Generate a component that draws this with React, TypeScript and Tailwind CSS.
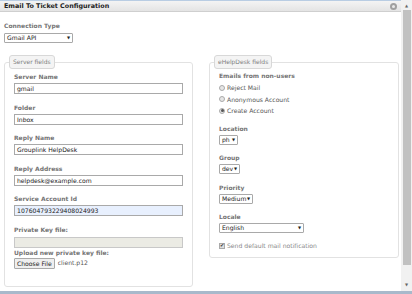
import React from "react";

const font = { fontFamily: '"DejaVu Sans", Verdana, sans-serif' };

function Label({ children, className = "" }: { children: React.ReactNode; className?: string }) {
  return <div className={"text-[6px] font-bold text-[#747474] leading-[8px] " + className}>{children}</div>;
}

function TextInput({ value, className = "" }: { value: string; className?: string }) {
  return (
    <div className={"h-[11px] w-[169px] border border-[#a9a9a9] text-[6.1px] leading-[9px] px-[2px] text-[#222] " + className}>
      {value}
    </div>
  );
}

function Select({ value, w }: { value: string; w: string }) {
  return (
    <div className={"h-[10px] border border-[#a9a9a9] rounded-[1px] bg-white flex items-center justify-between px-[2px] text-[6.1px] leading-[8px] text-[#222] " + w}>
      <span>{value}</span>
      <span className="text-[4px]">▼</span>
    </div>
  );
}

function Radio({ checked, label }: { checked?: boolean; label: string }) {
  return (
    <div className="flex items-center gap-[2px] h-[11.5px] text-[6.1px] text-[#555]">
      <span className="w-[6px] h-[6px] rounded-full border border-[#aaa] bg-[#e6e6e6] flex items-center justify-center">
        {checked && <span className="w-[3px] h-[3px] rounded-full bg-[#555]" />}
      </span>
      <span>{label}</span>
    </div>
  );
}

function Legend({ children }: { children: React.ReactNode }) {
  return (
    <div className="absolute left-[4px] top-[-8px] h-[14px] px-[3px] border border-[#d8d8d8] rounded-[3px] bg-[#f4f4f4] text-[6px] text-[#808080] leading-[12px]">
      {children}
    </div>
  );
}

export default function App() {
  return (
    <div className="w-[412px] h-[294px] overflow-hidden bg-white relative" style={font}>
      <div className="flex h-[291px]">
        <div className="w-[401px] flex flex-col">
          <div className="h-[12px] border-t border-[#b9cde3] bg-gradient-to-b from-[#f4f4f4] to-[#e4e4e4] border-b border-b-[#cfcfcf] flex items-center justify-between pl-[4px] pr-[4px]">
            <span className="text-[6.4px] font-bold text-[#222] leading-[10px]">Email To Ticket Configuration</span>
            <span className="w-[7px] h-[7px] rounded-full bg-[#a0a0a0] flex items-center justify-center">
              <span className="w-[3px] h-[3px] rounded-full bg-[#e8e8e8]" />
            </span>
          </div>
          <div className="pl-[4px] pt-[10px]">
            <Label>Connection Type</Label>
            <div className="mt-[3px]">
              <Select value="Gmail API" w="w-[69px]" />
            </div>
          </div>
          <div className="flex pl-[4px] mt-[19px] gap-[16px]">
            <div className="relative w-[189px] h-[225px] border border-[#e2e2e2] rounded-[3px] pl-[9px] pt-[10px]">
              <Legend>Server fields</Legend>
              <Label>Server Name</Label>
              <TextInput value="gmail" className="mt-[2px]" />
              <Label className="mt-[9.5px]">Folder</Label>
              <TextInput value="Inbox" className="mt-[2px]" />
              <Label className="mt-[9.5px]">Reply Name</Label>
              <TextInput value="Grouplink HelpDesk" className="mt-[2px]" />
              <Label className="mt-[9.5px]">Reply Address</Label>
              <TextInput value="helpdesk@example.com" className="mt-[2px]" />
              <Label className="mt-[9.5px]">Service Account Id</Label>
              <TextInput value="107604793229408024993" className="mt-[2px] bg-[#e8f0fe]" />
              <Label className="mt-[9.5px]">Private Key file:</Label>
              <TextInput value="" className="mt-[3px] bg-[#ebebe4] border-[#c8c8c8]" />
              <Label className="mt-[1px]">Upload new private key file:</Label>
              <div className="flex items-center mt-[1px] gap-[3px]">
                <div className="h-[11px] px-[2px] border border-[#a9a9a9] bg-[#efefef] rounded-[1px] text-[6.1px] leading-[9px] text-[#222]">Choose File</div>
                <span className="text-[6.1px] text-[#555]">client.p12</span>
              </div>
            </div>
            <div className="relative w-[190px] h-[196px] border border-[#e2e2e2] rounded-[3px] pl-[9px] pt-[9px]">
              <Legend>eHelpDesk fields</Legend>
              <Label>Emails from non-users</Label>
              <div className="mt-[2px]">
                <Radio label="Reject Mail" />
                <Radio label="Anonymous Account" />
                <Radio checked label="Create Account" />
              </div>
              <Label className="mt-[8px]">Location</Label>
              <div className="mt-[2px]"><Select value="ph" w="w-[19px]" /></div>
              <Label className="mt-[9.5px]">Group</Label>
              <div className="mt-[2px]"><Select value="dev" w="w-[21px]" /></div>
              <Label className="mt-[9.5px]">Priority</Label>
              <div className="mt-[2px]"><Select value="Medium" w="w-[34px]" /></div>
              <Label className="mt-[9.5px]">Locale</Label>
              <div className="mt-[2px]"><Select value="English" w="w-[85px]" /></div>
              <div className="flex items-center gap-[2px] mt-[8px] text-[6.1px] text-[#888]">
                <span className="w-[6px] h-[6px] border border-[#aaa] bg-[#ddd] flex items-center justify-center text-[5px] leading-[5px] text-[#333]">✔</span>
                <span>Send default mail notification</span>
              </div>
            </div>
          </div>
        </div>
        <div className="w-[11px] bg-[#f1f1f1] flex flex-col items-center">
          <span className="text-[4px] text-[#666] mt-[3px] h-[6px]">▲</span>
          <div className="w-[8px] bg-[#c1c1c1] h-[255px] mt-[1px]" />
          <div className="flex-1" />
          <span className="text-[4px] text-[#666] mb-[3px]">▼</span>
        </div>
      </div>
      <div className="h-[3px] bg-[#a8b9cb]" />
    </div>
  );
}
